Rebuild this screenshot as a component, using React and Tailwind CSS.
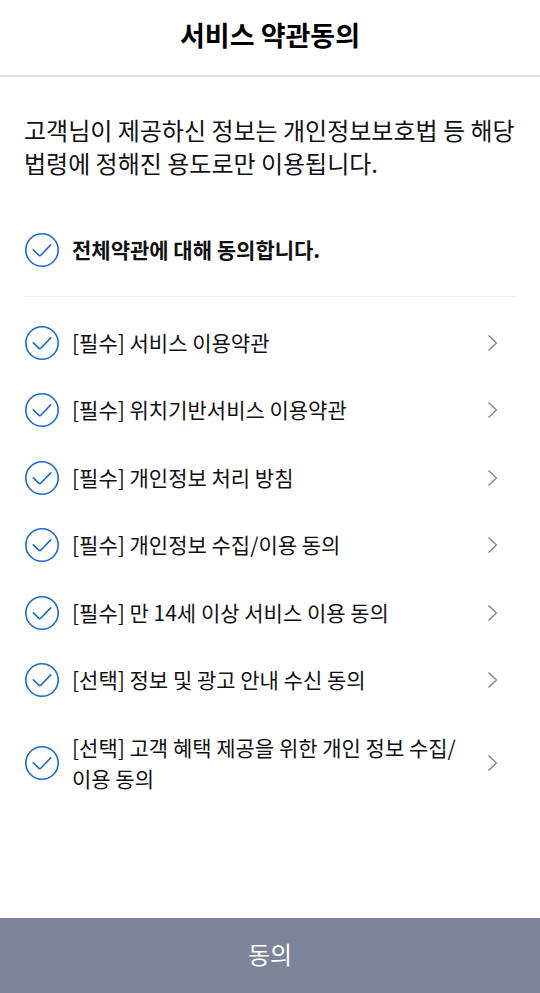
import React, { useState } from 'react';

const terms = [
  '[필수] 서비스 이용약관',
  '[필수] 위치기반서비스 이용약관',
  '[필수] 개인정보 처리 방침',
  '[필수] 개인정보 수집/이용 동의',
  '[필수] 만 14세 이상 서비스 이용 동의',
  '[선택] 정보 및 광고 안내 수신 동의',
  '[선택] 고객 혜택 제공을 위한 개인 정보 수집/이용 동의',
];

const CheckCircle = ({ checked }) => (
  <svg
    className={`h-9 w-9 shrink-0 ${checked ? 'text-[#1a69d8]' : 'text-gray-300'}`}
    viewBox="0 0 36 36"
    fill="none"
    stroke="currentColor"
    strokeWidth="1.6"
    strokeLinecap="round"
    strokeLinejoin="round"
  >
    <circle cx="18" cy="18" r="16.2" />
    <path d="M9.3 17.8 L15.3 23.6 Q15.9 24 16.5 23.5 L26.7 12.9" />
  </svg>
);

const ChevronIcon = () => (
  <svg
    className="h-5 w-3 shrink-0"
    viewBox="0 0 12 20"
    fill="none"
    stroke="#858585"
    strokeWidth="1.4"
  >
    <path d="M1.5 2.4 L9.4 10 L1.5 17.6" />
  </svg>
);

const App = () => {
  const [checked, setChecked] = useState(terms.map(() => true));
  const allChecked = checked.every(Boolean);

  const toggle = (index) => {
    setChecked(checked.map((value, i) => (i === index ? !value : value)));
  };

  return (
    <div className="flex h-[993px] w-[540px] flex-col bg-white font-['Noto_Sans_CJK_KR',sans-serif] text-[#111]">
      {/* Header */}
      <header className="flex h-[77px] shrink-0 items-center justify-center border-b-2 border-[#e2e2e2] pb-[5px]">
        <h1 className="text-[27px] leading-9 font-bold text-black">서비스 약관동의</h1>
      </header>

      {/* Main Content */}
      <main className="flex-1 px-6 pt-9">
        <p className="text-[24px] leading-[33px] whitespace-nowrap">
          고객님이 제공하신 정보는 개인정보보호법 등 해당
          <br />
          법령에 정해진 용도로만 이용됩니다.
        </p>

        <button
          className="mt-[53px] flex w-full items-center gap-3 border-b border-[#eee] pb-7 text-left"
          onClick={() => setChecked(terms.map(() => !allChecked))}
        >
          <CheckCircle checked={allChecked} />
          <span className="pb-0.5 text-[21px] leading-8 font-bold">전체약관에 대해 동의합니다.</span>
        </button>

        {/* Terms List */}
        <ul className="mt-[27.6px] flex flex-col gap-[31.5px]">
          {terms.map((term, index) => (
            <li key={term} className="flex min-h-9 items-center pr-[17px]">
              <button className="flex flex-1 items-center gap-3 text-left" onClick={() => toggle(index)}>
                <CheckCircle checked={checked[index]} />
                <span className="w-[392px] py-0.5 text-[21px] leading-[31.5px]">{term}</span>
              </button>
              <ChevronIcon />
            </li>
          ))}
        </ul>
      </main>

      {/* Submit */}
      <button className="h-[75px] shrink-0 bg-[#7d8398] pb-1 text-[24px] text-white">동의</button>
    </div>
  );
};

export default App;
